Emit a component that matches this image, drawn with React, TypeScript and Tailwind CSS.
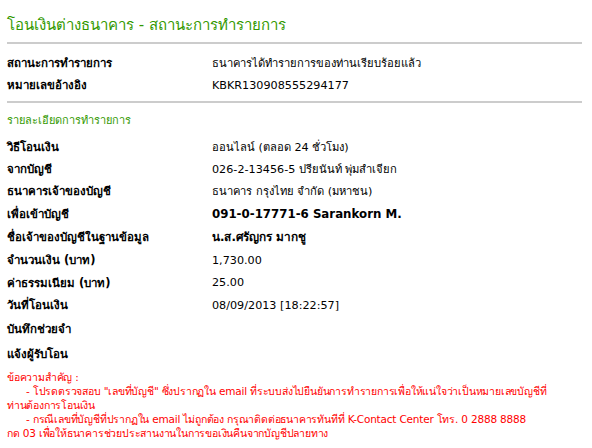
import React from "react";

type Row = { label: string; value?: string; strong?: boolean; h: string };

const summary: Row[] = [
  { label: "สถานะการทำรายการ", value: "ธนาคารได้ทำรายการของท่านเรียบร้อยแล้ว", h: "h-[22px]" },
  { label: "หมายเลขอ้างอิง", value: "KBKR130908555294177", h: "h-[22px]" },
];

const details: Row[] = [
  { label: "วิธีโอนเงิน", value: "ออนไลน์ (ตลอด 24 ชั่วโมง)", h: "h-[22px]" },
  { label: "จากบัญชี", value: "026-2-13456-5 ปรียนันท์ พุ่มสำเจียก", h: "h-[22px]" },
  { label: "ธนาคารเจ้าของบัญชี", value: "ธนาคาร กรุงไทย จำกัด (มหาชน)", h: "h-[22px]" },
  { label: "เพื่อเข้าบัญชี", value: "091-0-17771-6 Sarankorn M.", strong: true, h: "h-[23px]" },
  { label: "ชื่อเจ้าของบัญชีในฐานข้อมูล", value: "น.ส.ศรัญกร มากชู", strong: true, h: "h-[24px]" },
  { label: "จำนวนเงิน (บาท)", value: "1,730.00", h: "h-[22px]" },
  { label: "ค่าธรรมเนียม (บาท)", value: "25.00", h: "h-[23px]" },
  { label: "วันที่โอนเงิน", value: "08/09/2013 [18:22:57]", h: "h-[22px]" },
  { label: "บันทึกช่วยจำ", h: "h-[26px]" },
  { label: "แจ้งผู้รับโอน", h: "h-[24px]" },
];

function InfoRow({ row }: { row: Row }) {
  return (
    <div className={`flex items-center ${row.h}`}>
      <div className="w-[205px] shrink-0 font-bold text-[11.5px] text-black">{row.label}</div>
      <div
        className={
          row.strong
            ? "font-bold text-[11.8px] text-black"
            : "text-[11.2px] text-black"
        }
      >
        {row.value}
      </div>
    </div>
  );
}

export default function App() {
  return (
    <div
      className="w-[592px] h-[448px] bg-white px-[7px] pt-[14px] overflow-hidden"
      style={{ fontFamily: "Tahoma, 'DejaVu Sans', Verdana, sans-serif" }}
    >
      <div className="w-[575px]">
        <h1 className="text-[15px] text-[#339900] h-[22px] leading-[22px]">
          โอนเงินต่างธนาคาร - สถานะการทำรายการ
        </h1>
        <div className="h-[2px] bg-[#cccccc] mt-[6px]" />
        <div className="pt-[9px] pb-[4px]">
          {summary.map((r) => (
            <InfoRow key={r.label} row={r} />
          ))}
        </div>
        <div className="h-[2px] bg-[#cccccc]" />

        <div className="text-[11px] text-[#339900] mt-[10px] h-[16px] leading-[16px]">
          รายละเอียดการทำรายการ
        </div>
        <div className="mt-[8px]">
          {details.map((r) => (
            <InfoRow key={r.label} row={r} />
          ))}
        </div>

        <div className="text-[10.5px] text-[#ff0000] leading-[14px] mt-[3px] whitespace-nowrap tracking-[-0.2px]">
          <div>ข้อความสำคัญ :</div>
          <div className="pl-[19px]">
            - โปรดตรวจสอบ "เลขที่บัญชี" ซึ่งปรากฏใน email ที่ระบบส่งไปยืนยันการทำรายการเพื่อให้แน่ใจว่าเป็นหมายเลขบัญชีที่
          </div>
          <div>ท่านต้องการโอนเงิน</div>
          <div className="pl-[19px]">
            - กรณีเลขที่บัญชีที่ปรากฏใน email ไม่ถูกต้อง กรุณาติดต่อธนาคารทันทีที่ K-Contact Center โทร. 0 2888 8888
          </div>
          <div>กด 03 เพื่อให้ธนาคารช่วยประสานงานในการขอเงินคืนจากบัญชีปลายทาง</div>
        </div>
      </div>
    </div>
  );
}
